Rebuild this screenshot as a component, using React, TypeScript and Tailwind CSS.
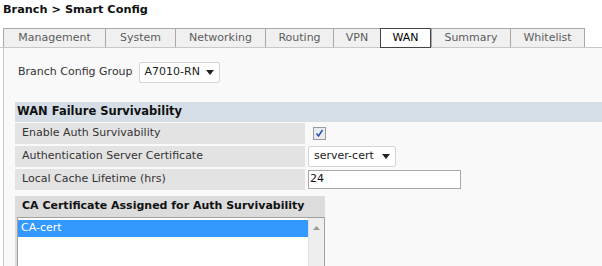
import React from "react";

const tabs = [
  { name: "Management", w: "w-[102px]" },
  { name: "System", w: "w-[70px]" },
  { name: "Networking", w: "w-[90px]" },
  { name: "Routing", w: "w-[68px]" },
  { name: "VPN", w: "w-[47px]" },
  { name: "WAN", w: "w-[51px]" },
  { name: "Summary", w: "w-[79px]" },
  { name: "Whitelist", w: "w-[75px]" },
];

function Caret() {
  return (
    <svg width="8" height="5" viewBox="0 0 8 5" className="shrink-0">
      <path d="M0 0 L8 0 L4 5 Z" fill="#222" />
    </svg>
  );
}

export default function App() {
  return (
    <div className="w-[602px] h-[266px] overflow-hidden bg-white font-['DejaVu_Sans',sans-serif] text-[11px] text-[#333]">
      <div className="h-[28px] pl-[3px] pt-[3px] font-bold text-[11.3px] text-[#111] leading-[14px]">
        Branch &gt; Smart Config
      </div>

      {/* tabs */}
      <div className="flex h-[20px] pl-[3px] border-b border-[#c8c8c8]">
        {tabs.map((t, i) =>
          t.name === "WAN" ? (
            <div
              key={t.name}
              className={`${t.w} h-[20px] flex items-center justify-center bg-white border border-[#444] text-black`}
            >
              {t.name}
            </div>
          ) : (
            <div
              key={t.name}
              className={`${t.w} h-[19px] flex items-center justify-center bg-[#f0f0f0] border-t border-l border-[#a8a8a8] text-[#5c5c5c] ${
                i === tabs.length - 1 ? "border-r" : ""
              }`}
            >
              {t.name}
            </div>
          )
        )}
      </div>

      {/* content */}
      <div className="ml-[3px] h-[220px] border-l border-[#c8c8c8] bg-[#f9f9f9]">
        <div className="flex items-center pt-[14px] pl-[14px] gap-[6px]">
          <span>Branch Config Group</span>
          <div className="w-[81px] h-[21px] flex items-center justify-between pl-[5px] pr-[5px] bg-white border border-[#d4d4d4] rounded-[2px] text-[#222]">
            <span>A7010-RN</span>
            <Caret />
          </div>
        </div>

        <div className="mt-[19px] ml-[11px] h-[20px] flex items-center pl-[2px] bg-[#d5dde6] font-bold text-[11.5px] text-[#111]">
          WAN Failure Survivability
        </div>

        <div className="ml-[11px] mt-[1px] flex flex-col gap-[2px]">
          <div className="flex h-[21px]">
            <div className="w-[290px] flex items-center pl-[7px] bg-[#e3e3e3]">Enable Auth Survivability</div>
            <div className="flex items-center pl-[8px]">
              <div className="w-[13px] h-[13px] border border-[#9a9a9a] bg-[#e8ecf2] flex items-center justify-center">
                <svg width="9" height="9" viewBox="0 0 9 9">
                  <path d="M1.5 4.5 L3.5 7 L7.5 1" stroke="#2b4fa8" strokeWidth="1.5" fill="none" />
                </svg>
              </div>
            </div>
          </div>
          <div className="flex h-[21px]">
            <div className="w-[290px] flex items-center pl-[7px] bg-[#e3e3e3]">Authentication Server Certificate</div>
            <div className="pl-[3px]">
              <div className="w-[88px] h-[21px] flex items-center justify-between pl-[5px] pr-[5px] bg-white border border-[#d4d4d4] rounded-[2px] text-[#222]">
                <span>server-cert</span>
                <Caret />
              </div>
            </div>
          </div>
          <div className="flex h-[21px]">
            <div className="w-[290px] flex items-center pl-[7px] bg-[#e3e3e3]">Local Cache Lifetime (hrs)</div>
            <div className="pl-[3px] flex items-center">
              <div className="w-[153px] h-[19px] flex items-center pl-[1px] bg-white border border-[#a8a8a8] text-[#111]">
                24
              </div>
            </div>
          </div>
        </div>

        <div className="mt-[6px] ml-[11px] w-[310px] bg-[#dcdcdc] pl-[2px]">
          <div className="h-[21px] flex items-center pl-[5px] font-bold text-[11px] text-[#111]">
            CA Certificate Assigned for Auth Survivability
          </div>
          <div className="flex h-[60px] bg-white border border-[#a0a0a0]">
            <div className="flex-1 pt-[2px]">
              <div className="h-[17px] flex items-center pl-[3px] bg-[#3399ff] text-white">CA-cert</div>
            </div>
            <div className="w-[16px] bg-[#eeeeee] border-l border-[#e0e0e0] flex justify-center pt-[8px]">
              <svg width="7" height="4" viewBox="0 0 7 4">
                <path d="M0 4 L7 4 L3.5 0 Z" fill="#9a9a9a" />
              </svg>
            </div>
          </div>
        </div>
      </div>
    </div>
  );
}
